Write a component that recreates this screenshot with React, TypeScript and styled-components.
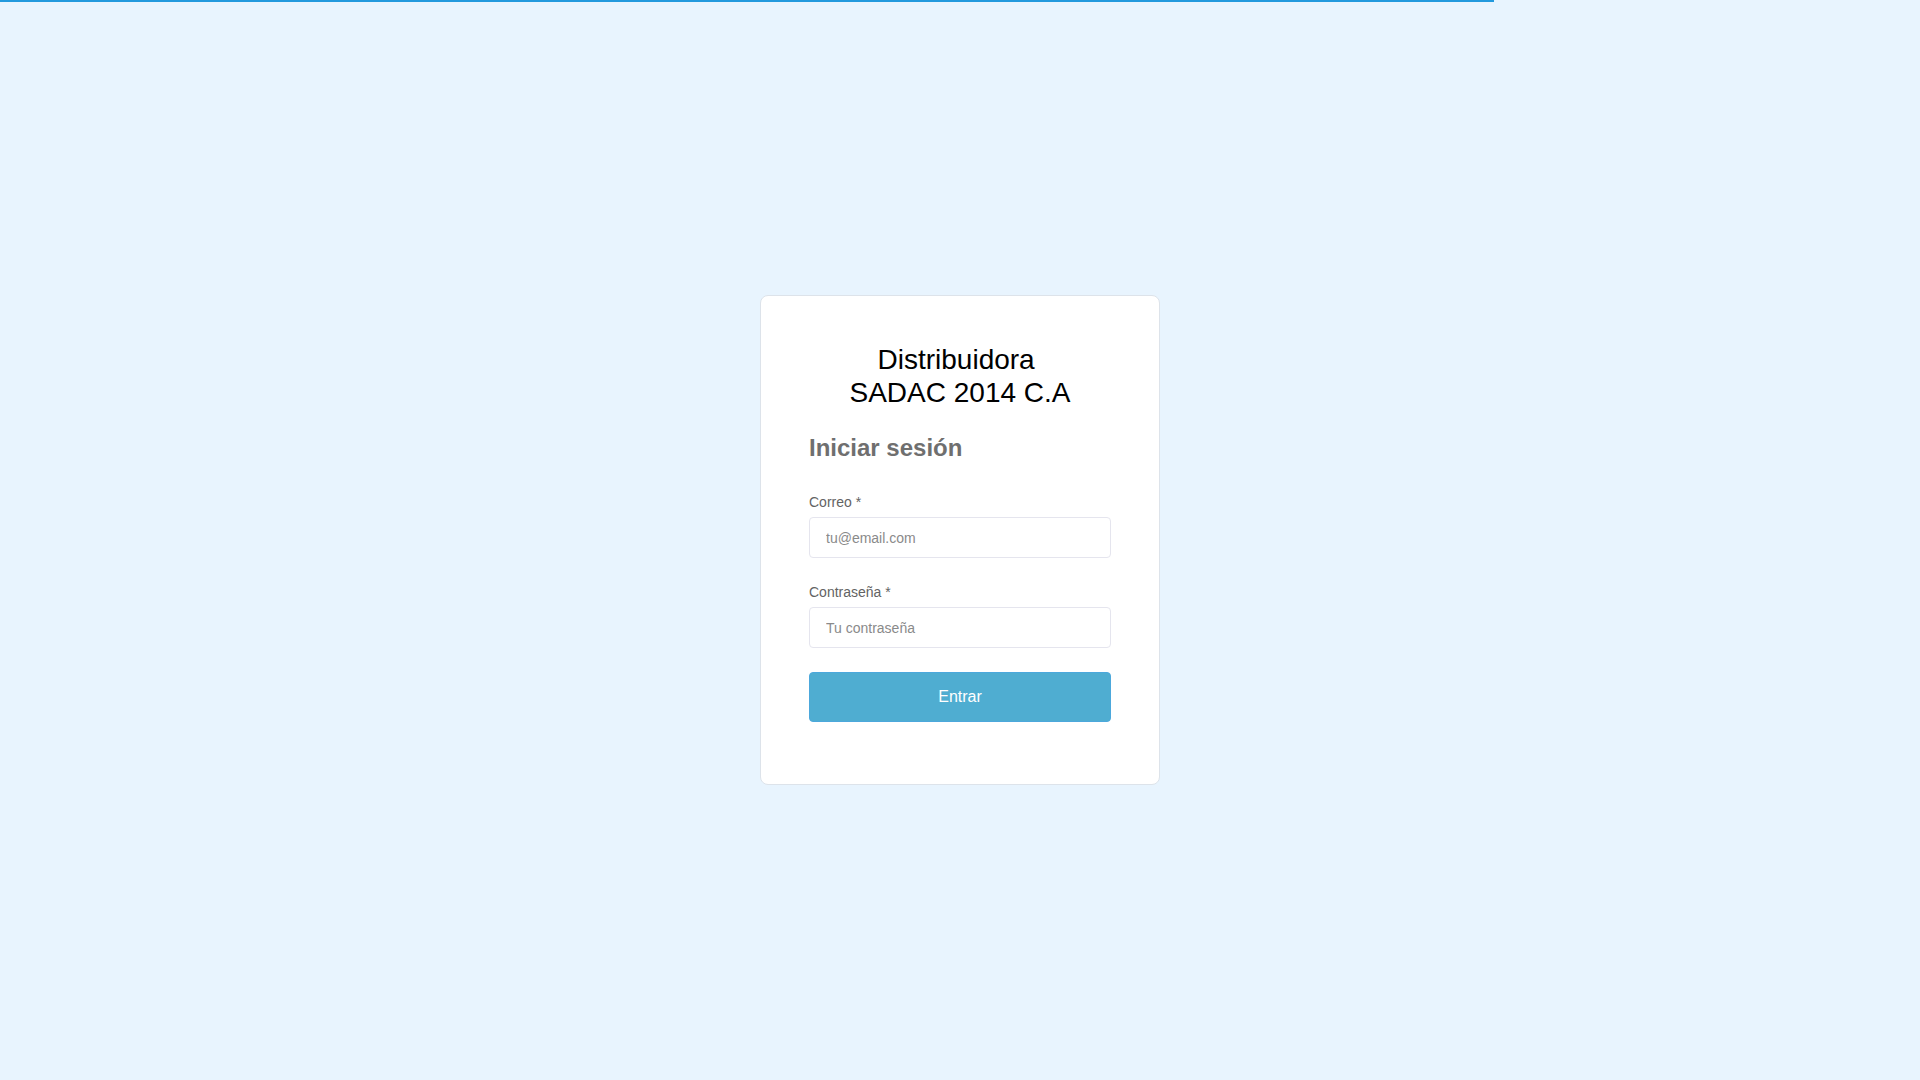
import React from "react";
import styled, { createGlobalStyle } from "styled-components";

const GlobalStyle = createGlobalStyle`
  html, body {
    margin: 0;
    padding: 0;
    background: #e8f4fe;
    font-family: "Liberation Sans", Arial, sans-serif;
  }
  * { box-sizing: border-box; }
`;

const ProgressBar = styled.div`
  position: fixed;
  top: 0;
  left: 0;
  height: 2px;
  background: #2299dd;
  z-index: 10;
`;

const Page = styled.main`
  min-height: 100vh;
  display: flex;
  align-items: center;
  justify-content: center;
`;

const Card = styled.section`
  width: 400px;
  background: #ffffff;
  border: 1px solid #dde3ea;
  border-radius: 8px;
  padding: 47px 48px 62px;
  display: flex;
  flex-direction: column;
`;

const Title = styled.h1`
  margin: 0;
  font-size: 28px;
  line-height: 1.2;
  font-weight: 400;
  color: #000;
  text-align: center;
`;

const Heading = styled.h2`
  margin: 24px 0 30px;
  font-size: 24px;
  line-height: 1.2;
  font-weight: 700;
  color: #6f6f6f;
`;

const Form = styled.form`
  display: flex;
  flex-direction: column;
  gap: 24px;
`;

const Field = styled.div`
  display: flex;
  flex-direction: column;
  gap: 5px;
`;

const Label = styled.label`
  font-size: 14px;
  line-height: 20px;
  color: #636363;
`;

const Input = styled.input`
  height: 41px;
  width: 100%;
  padding: 0 16px;
  border: 1px solid #e5e5ee;
  border-radius: 4px;
  background: #fff;
  font-family: "Liberation Sans", Arial, sans-serif;
  font-size: 14px;
  color: #333;
  outline: none;
  &::placeholder { color: #8a8a8a; }
`;

const Button = styled.button`
  height: 50px;
  width: 100%;
  border: 1px solid #4ca8dc;
  border-radius: 4px;
  background: #4fadd1;
  color: #ffffff;
  font-family: "Liberation Sans", Arial, sans-serif;
  font-size: 16px;
  cursor: pointer;
`;

export default function App() {
  const pct = 77.8;
  return (
    <>
      <GlobalStyle />
      <ProgressBar style={{ width: `${pct}%` }} />
      <Page>
        <Card>
          <Title>
            Distribuidora{"\u00a0"}
            <br />
            SADAC 2014 C.A
          </Title>
          <Heading>Iniciar sesión</Heading>
          <Form onSubmit={(e) => e.preventDefault()}>
            <Field>
              <Label htmlFor="email">Correo *</Label>
              <Input id="email" type="email" placeholder="tu@email.com" />
            </Field>
            <Field>
              <Label htmlFor="password">Contraseña *</Label>
              <Input id="password" type="password" placeholder="Tu contraseña" />
            </Field>
            <Button type="submit">Entrar</Button>
          </Form>
        </Card>
      </Page>
    </>
  );
}
